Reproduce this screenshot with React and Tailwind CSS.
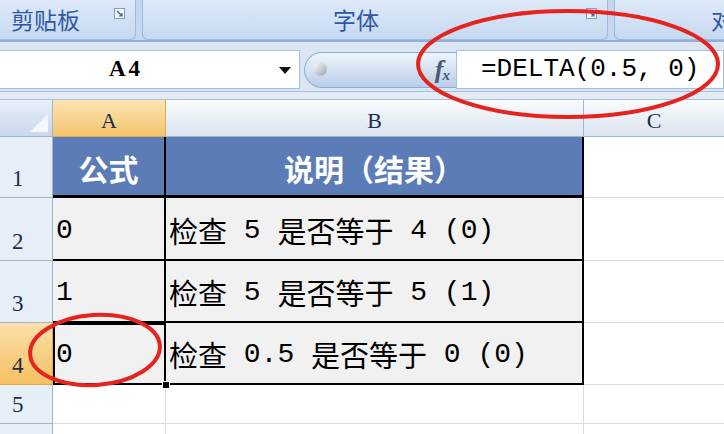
import React from 'react'

const cjk = { fontFamily: '"Noto Sans CJK SC", "Noto Sans", sans-serif' }
const mono = { fontFamily: '"Liberation Mono", "DejaVu Sans Mono", monospace' }
const serif = { fontFamily: '"Liberation Serif", "DejaVu Serif", serif' }

const Launcher = () => (
  <svg width="11" height="11" viewBox="0 0 11 11" className="mt-[8px]">
    <rect x="0.5" y="0.5" width="10" height="10" fill="#f4f8fd" stroke="#7f9fc8" />
    <path d="M3 3 L8 8 M8 5 L8 8 L5 8" stroke="#3a5f95" strokeWidth="1.2" fill="none" />
  </svg>
)

const ColHead = ({ label, active, last }) => (
  <div
    className={`flex items-center justify-center pt-[4px] text-[22px] text-[#1b2d4d] border-b ${last ? '' : 'border-r'} ${active ? 'bg-gradient-to-b from-[#fbe4b4] to-[#f5c56a] border-[#e0a94a]' : 'bg-gradient-to-b from-[#fafcfe] to-[#dae3ef] border-[#9eb6ce]'}`}
    style={serif}
  >
    {label}
  </div>
)

const RowHead = ({ n, active }) => (
  <div
    className={`flex items-end pl-[12px] pb-[1px] text-[23px] text-[#1b2d4d] border-r border-b ${active ? 'bg-gradient-to-b from-[#fbe0a8] to-[#f4c060] border-[#e0a94a]' : 'bg-[#e6eef8] border-[#9eb6ce]'}`}
    style={serif}
  >
    {n}
  </div>
)

// half-width runs in a monospace face, CJK runs in the CJK face
const Mixed = ({ text }) =>
  text.split(/([\x20-\x7e]+)/).filter(Boolean).map((part, i) =>
    /^[\x20-\x7e]+$/.test(part) ? (
      <span key={i} className="text-[28px] whitespace-pre" style={mono}>{part}</span>
    ) : (
      <span key={i}>{part}</span>
    )
  )

const rows = [
  { n: 2, a: '0', b: '检查 5 是否等于 4 (0)' },
  { n: 3, a: '1', b: '检查 5 是否等于 5 (1)' },
  { n: 4, a: '0', b: '检查 0.5 是否等于 0 (0)' },
]

export default function App() {
  return (
    <div className="relative w-[724px] h-[434px] overflow-hidden bg-white flex flex-col" style={cjk}>
      {/* ribbon group labels */}
      <div className="flex h-[42px] shrink-0 bg-[#c4d7ef] border-b-2 border-[#90afd9]">
        <div className="w-[136px] flex justify-between pl-[11px] pr-[10px] rounded-br-[6px] border-r border-b border-[#9dbbe2] bg-gradient-to-b from-[#dde9f8] to-[#c6d9f1]">
          <span className="text-[23px] text-[#2d58a3] leading-[38px]">剪贴板</span>
          <Launcher />
        </div>
        <div className="ml-[6px] w-[466px] flex justify-end relative pr-[10px] rounded-b-[6px] border-x border-b border-[#9dbbe2] bg-gradient-to-b from-[#dde9f8] to-[#c6d9f1]">
          <span className="absolute left-[190px] text-[23px] text-[#2d58a3] leading-[38px]">字体</span>
          <Launcher />
        </div>
        <div className="ml-[6px] flex-1 pl-[96px] rounded-bl-[6px] border-l border-b border-[#9dbbe2] bg-gradient-to-b from-[#dde9f8] to-[#c6d9f1] overflow-hidden">
          <span className="text-[23px] text-[#2d58a3] leading-[38px]">对</span>
        </div>
      </div>

      {/* formula bar */}
      <div className="flex h-[50px] shrink-0 pt-[8px] pb-[2px] bg-[#dbe6f4] border-b border-[#a8c0de]">
        <div className="w-[300px] relative flex items-center bg-white border-y border-r border-[#a8c0de]">
          <span className="absolute left-[109px] text-[23px] font-bold text-black tracking-[3px]" style={serif}>A4</span>
          <svg width="12" height="8" viewBox="0 0 12 8" className="absolute left-[279px] top-[16px]">
            <path d="M0 0 L12 0 L6 7 Z" fill="#111" />
          </svg>
        </div>
        <div className="w-[156px] flex items-center pl-[4px] bg-[#dbe6f4]">
          <div className="relative h-[36px] flex-1 flex items-center justify-end pr-[6px] rounded-l-full border border-r-0 border-[#8eaed8] bg-gradient-to-b from-[#eef4fb] via-[#d4e2f3] to-[#b8cde9]">
            <div className="absolute left-[8px] top-[9px] w-[14px] h-[14px] rounded-full bg-gradient-to-br from-[#ffffff] to-[#9aa4b0]" />
            <span className="flex items-baseline text-[#4a5a70]" style={serif}>
              <span className="text-[26px] italic font-bold">f</span>
              <span className="text-[15px] italic font-bold -ml-[1px] relative top-[2px]">x</span>
            </span>
          </div>
        </div>
        <div className="flex-1 flex items-center pl-[24px] bg-white border border-[#a8c0de]">
          <span className="text-[26px] text-black" style={mono}>=DELTA(0.5, 0)</span>
        </div>
      </div>

      <div className="h-[8px] shrink-0 bg-[#e3ebf5] border-b border-[#a8c0de]" />

      {/* sheet */}
      <div className="flex-1 grid grid-cols-[53px_113px_418px_1fr] grid-rows-[37px_61px_63px_62px_62px_39px_1fr]">
        <div className="relative bg-gradient-to-b from-[#e8eff9] to-[#c9d8ec] border-r border-b border-[#9eb6ce]">
          <svg width="18" height="18" viewBox="0 0 18 18" className="absolute right-[4px] bottom-[4px]">
            <path d="M18 0 L18 18 L0 18 Z" fill="#f4f7fb" />
          </svg>
        </div>
        <ColHead label="A" active />
        <ColHead label="B" />
        <ColHead label="C" last />

        <RowHead n={1} />
        <div className="flex items-center justify-center pt-[4px] bg-[#5b7cb6] border-r-2 border-b-[3px] border-black text-white text-[30px] font-bold">公式</div>
        <div className="flex items-center justify-center pt-[4px] bg-[#5b7cb6] border-r-2 border-b-[3px] border-black text-white text-[30px] font-bold">说明（结果）</div>
        <div className="border-b border-[#d7dde7]" />

        {rows.map((r) => (
          <React.Fragment key={r.n}>
            <RowHead n={r.n} active={r.n === 4} />
            <div className={`relative flex items-center pt-[4px] pl-[3px] bg-[#f1f1f1] border-r-2 border-b-2 border-black text-[28px] text-black ${r.n === 4 ? 'outline-2 outline-black -outline-offset-2' : ''}`} style={mono}>
              {r.a}
              {r.n === 4 && <div className="absolute -right-[6px] -bottom-[6px] w-[8px] h-[8px] bg-black border border-white z-10" />}
            </div>
            <div className="flex items-center pt-[4px] pl-[3px] bg-[#f1f1f1] border-r-2 border-b-2 border-black text-[29px] text-black">
              <Mixed text={r.b} />
            </div>
            <div className="border-b border-[#d7dde7]" />
          </React.Fragment>
        ))}

        <RowHead n={5} />
        <div className="border-r border-b border-[#d7dde7]" />
        <div className="border-r border-b border-[#d7dde7]" />
        <div className="border-b border-[#d7dde7]" />

        <div className="bg-[#e6eef8] border-r border-[#9eb6ce]" />
        <div className="border-r border-[#d7dde7]" />
        <div className="border-r border-[#d7dde7]" />
        <div />
      </div>

      {/* red annotation ellipses */}
      <svg className="absolute inset-0 pointer-events-none" width="724" height="434" viewBox="0 0 724 434">
        <ellipse cx="568" cy="64" rx="150" ry="53" fill="none" stroke="#e5231f" strokeWidth="4" />
        <ellipse cx="95" cy="350" rx="65" ry="35" fill="none" stroke="#e5231f" strokeWidth="4" transform="rotate(-4 95 350)" />
      </svg>
    </div>
  )
}
